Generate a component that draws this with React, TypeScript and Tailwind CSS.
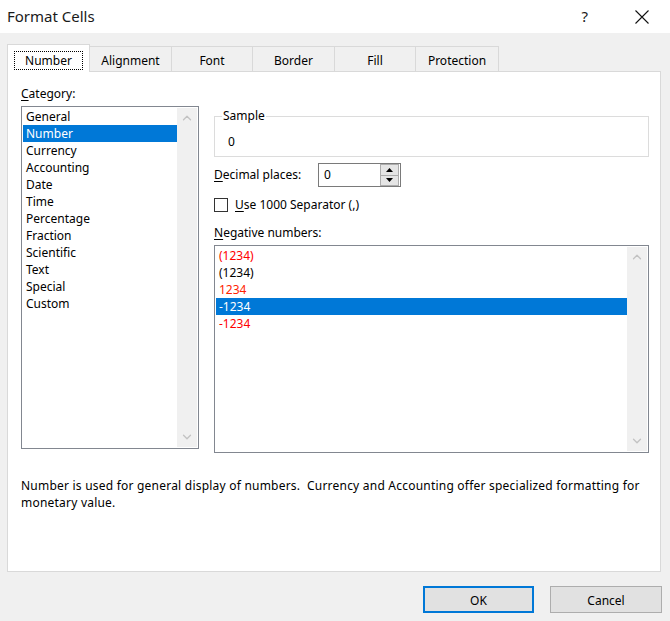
import { ChevronUp, ChevronDown } from "lucide-react";

const categories = [
  "General",
  "Number",
  "Currency",
  "Accounting",
  "Date",
  "Time",
  "Percentage",
  "Fraction",
  "Scientific",
  "Text",
  "Special",
  "Custom",
];

const negatives = [
  { label: "(1234)", color: "text-[#ff0000]" },
  { label: "(1234)", color: "text-black" },
  { label: "1234", color: "text-[#ff2200]" },
  { label: "-1234", color: "text-black" },
  { label: "-1234", color: "text-[#ff0000]" },
];

const tabs = [
  { name: "Alignment", w: "w-[82px]" },
  { name: "Font", w: "w-[81px]" },
  { name: "Border", w: "w-[82px]" },
  { name: "Fill", w: "w-[81px]" },
  { name: "Protection", w: "w-[83px]" },
];

function ScrollTrack() {
  return (
    <div className="w-[20px] bg-[#f0f0f0] flex flex-col items-center justify-between py-[3px] shrink-0">
      <ChevronUp size={14} strokeWidth={2.2} className="text-[#c2c2c2]" />
      <ChevronDown size={14} strokeWidth={2.2} className="text-[#c2c2c2]" />
    </div>
  );
}

export default function App() {
  return (
    <div className="w-[670px] h-[621px] bg-[#f0f0f0] flex flex-col font-['Segoe_UI','Noto_Sans',sans-serif] text-[12px] text-black overflow-hidden">
      {/* title bar */}
      <div className="h-[33px] bg-white flex items-center pl-[7px] shrink-0">
        <span className="text-[15px] text-[#1a1a1a]">Format Cells</span>
        <span className="ml-auto text-[15px] text-[#1a1a1a] mr-[47px]">?</span>
        <svg width="14" height="14" viewBox="0 0 14 14" className="mr-[21px]">
          <path d="M0.5 0.5 L13.5 13.5 M13.5 0.5 L0.5 13.5" stroke="#111" strokeWidth="1.1" />
        </svg>
      </div>

      {/* tabs */}
      <div className="flex items-end pl-[7px] pt-[11px] shrink-0">
        <div className="w-[83px] h-[28px] bg-white border border-b-0 border-[#d9d9d9] -mb-px relative z-10 flex items-center justify-center">
          <span className="border border-dotted border-black px-[10px] leading-[17px] mt-[3px]">Number</span>
        </div>
        {tabs.map((t) => (
          <div
            key={t.name}
            className={`${t.w} h-[25px] border-t border-r border-[#d9d9d9] flex items-center justify-center pt-[3px]`}
          >
            {t.name}
          </div>
        ))}
      </div>

      {/* panel */}
      <div className="mx-[7px] w-[654px] h-[501px] bg-white border border-[#d9d9d9] pt-[14px] pl-[13px] shrink-0">
        <div className="flex gap-[15px] items-start">
          {/* left column */}
          <div className="w-[178px] flex flex-col">
            <div className="leading-[16px]">
              <span className="underline underline-offset-2">C</span>ategory:
            </div>
            <div className="mt-[4px] h-[343px] border border-[#828790] p-px flex">
              <div className="flex-1 flex flex-col">
                {categories.map((c) => (
                  <div
                    key={c}
                    className={`h-[17px] leading-[17px] pl-[3px] ${
                      c === "Number" ? "bg-[#0078d7] text-white" : ""
                    }`}
                  >
                    {c}
                  </div>
                ))}
              </div>
              <ScrollTrack />
            </div>
          </div>

          {/* right column */}
          <div className="w-[435px] flex flex-col">
            <fieldset className="mt-[22px] h-[49px] border border-[#dcdcdc]">
              <legend className="ml-[7px] px-px leading-[16px]">Sample</legend>
              <div className="leading-[16px] mt-[10px] pl-[13px]">0</div>
            </fieldset>

            <div className="mt-[6px] flex items-center h-[24px]">
              <span className="w-[104px]">
                <span className="underline underline-offset-2">D</span>ecimal places:
              </span>
              <div className="w-[83px] h-[24px] border border-[#7a7a7a] flex items-center bg-white">
                <span className="flex-1 pl-[5px]">0</span>
                <div className="w-[19px] h-[22px] flex flex-col mr-px">
                  <div className="flex-1 bg-[#e5e5e5] border border-[#acacac] flex items-center justify-center">
                    <svg width="7" height="4" viewBox="0 0 7 4">
                      <path d="M3.5 0 L7 4 L0 4 Z" fill="#000" />
                    </svg>
                  </div>
                  <div className="flex-1 bg-[#e5e5e5] border border-t-0 border-[#acacac] flex items-center justify-center">
                    <svg width="7" height="4" viewBox="0 0 7 4">
                      <path d="M0 0 L7 0 L3.5 4 Z" fill="#000" />
                    </svg>
                  </div>
                </div>
              </div>
            </div>

            <div className="mt-[11px] flex items-center h-[14px]">
              <div className="w-[14px] h-[14px] border border-[#333] bg-white" />
              <span className="ml-[7px]">
                <span className="underline underline-offset-2">U</span>se 1000 Separator (,)
              </span>
            </div>

            <div className="mt-[13px] leading-[16px]">
              <span className="underline underline-offset-2">N</span>egative numbers:
            </div>
            <div className="mt-[4px] h-[208px] border border-[#828790] p-px flex">
              <div className="flex-1 flex flex-col">
                {negatives.map((n, i) => (
                  <div
                    key={i}
                    className={`h-[17px] leading-[17px] pl-[3px] ${
                      i === 3 ? "bg-[#0078d7] text-white" : n.color
                    }`}
                  >
                    {n.label}
                  </div>
                ))}
              </div>
              <ScrollTrack />
            </div>
          </div>
        </div>

        <p className="mt-[24px] leading-[17px] w-[628px] tracking-[0.22px]">
          Number is used for general display of numbers.{"\u00a0 "}Currency and Accounting offer specialized formatting for
          <br />
          monetary value.
        </p>
      </div>

      {/* buttons */}
      <div className="flex justify-end gap-[16px] pr-[8px] mt-[14px]">
        <button className="w-[111px] h-[27px] bg-[#e1e1e1] border-2 border-[#0078d7] leading-none pt-[2px]">OK</button>
        <button className="w-[112px] h-[27px] bg-[#e1e1e1] border border-[#adadad] leading-none pt-[2px]">Cancel</button>
      </div>
    </div>
  );
}
